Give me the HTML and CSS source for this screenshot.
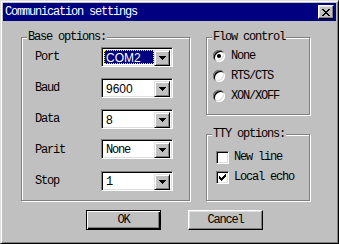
FILE: index.html
```html
<!DOCTYPE html>
<html lang="en">
<head>
  <meta charset="UTF-8">
  <title>Communication settings</title>
  <link rel="stylesheet" href="styles.css">
</head>
<body>
  <div class="window">
    <div class="titlebar">
      <span class="title">Communication settings</span>
      <button class="close-btn">
        <svg width="8" height="7" viewBox="0 0 8 7"><path d="M0 0h2v1H0zM6 0h2v1H6zM1 1h2v1H1zM5 1h2v1H5zM2 2h4v1H2zM3 3h2v1H3zM2 4h4v1H2zM1 5h2v1H1zM5 5h2v1H5zM0 6h2v1H0zM6 6h2v1H6z" fill="#000"/></svg>
      </button>
    </div>

    <div class="dialog-body">
      <div class="groups">
        <!-- Base options -->
        <div class="group group-base">
          <div class="group-title">Base options:</div>
          <div class="field-grid">
            <span class="field-label">Port</span>
            <div class="combo">
              <span class="combo-value sans focused">COM2</span>
              <span class="combo-btn"><svg width="7" height="4" viewBox="0 0 7 4"><path d="M0 0h7v1H0zM1 1h5v1H1zM2 2h3v1H2zM3 3h1v1H3z"/></svg></span>
            </div>

            <span class="field-label">Baud</span>
            <div class="combo">
              <span class="combo-value sans">9600</span>
              <span class="combo-btn"><svg width="7" height="4" viewBox="0 0 7 4"><path d="M0 0h7v1H0zM1 1h5v1H1zM2 2h3v1H2zM3 3h1v1H3z"/></svg></span>
            </div>

            <span class="field-label">Data</span>
            <div class="combo">
              <span class="combo-value sans">8</span>
              <span class="combo-btn"><svg width="7" height="4" viewBox="0 0 7 4"><path d="M0 0h7v1H0zM1 1h5v1H1zM2 2h3v1H2zM3 3h1v1H3z"/></svg></span>
            </div>

            <span class="field-label">Parit</span>
            <div class="combo combo-parit">
              <span class="combo-value">None</span>
              <span class="combo-btn"><svg width="7" height="4" viewBox="0 0 7 4"><path d="M0 0h7v1H0zM1 1h5v1H1zM2 2h3v1H2zM3 3h1v1H3z"/></svg></span>
            </div>

            <span class="field-label">Stop</span>
            <div class="combo">
              <span class="combo-value">1</span>
              <span class="combo-btn"><svg width="7" height="4" viewBox="0 0 7 4"><path d="M0 0h7v1H0zM1 1h5v1H1zM2 2h3v1H2zM3 3h1v1H3z"/></svg></span>
            </div>
          </div>
        </div>

        <div class="side">
          <!-- Flow control -->
          <div class="group group-flow">
            <div class="group-title">Flow control</div>
            <div class="option-list radios">
              <div class="option"><span class="radio checked"></span>None</div>
              <div class="option"><span class="radio"></span>RTS/CTS</div>
              <div class="option"><span class="radio"></span>XON/XOFF</div>
            </div>
          </div>

          <!-- TTY options -->
          <div class="group group-tty">
            <div class="group-title">TTY options:</div>
            <div class="option-list checks">
              <div class="option"><span class="checkbox"></span>New line</div>
              <div class="option"><span class="checkbox"><svg width="7" height="7" viewBox="0 0 7 7"><path d="M6 0h1v1H6zM5 1h2v1H5zM0 2h1v1H0zM4 2h3v1H4zM0 3h2v1H0zM3 3h3v1H3zM0 4h5v1H0zM1 5h3v1H1zM2 6h1v1H2z"/></svg></span>Local echo</div>
            </div>
          </div>
        </div>
      </div>

      <div class="buttons">
        <button class="btn btn-default">OK</button>
        <button class="btn">Cancel</button>
      </div>
    </div>
  </div>
</body>
</html>
```

FILE: styles.css
```css
body {
  margin: 0;
  background-color: #c0c0c0;
  font-family: "Liberation Mono", monospace;
  font-size: 12px;
  letter-spacing: -1.2px;
  color: #000;
}
.window {
  box-sizing: border-box;
  width: 339px;
  height: 244px;
  padding: 2px;
  background-color: #c0c0c0;
  border: 1px solid;
  border-color: #dfdfdf #000 #000 #dfdfdf;
  box-shadow: inset 1px 1px #fff, inset -1px -1px #808080;
}
.titlebar {
  height: 18px;
  padding: 0 2px;
  display: flex;
  align-items: center;
  justify-content: space-between;
  background-color: #000080;
  color: #fff;
}
.close-btn {
  box-sizing: border-box;
  width: 16px;
  height: 14px;
  padding: 0;
  display: flex;
  align-items: center;
  justify-content: center;
  background-color: #c0c0c0;
  border: 1px solid;
  border-color: #fff #000 #000 #fff;
  box-shadow: inset -1px -1px #808080, inset 1px 1px #dfdfdf;
}
.dialog-body {
  padding: 16px 0 0 18px;
}
.groups {
  display: flex;
  gap: 16px;
}
.group {
  box-sizing: border-box;
  border: 1px solid #808080;
  box-shadow: 1px 1px 0 #fff, inset 1px 1px 0 #fff;
}
.group-title {
  width: fit-content;
  height: 12px;
  line-height: 12px;
  margin: -7px 0 0 5px;
  padding: 0 1px;
  background-color: #c0c0c0;
}
.group-base {
  width: 169px;
  height: 164px;
}
.side {
  display: flex;
  flex-direction: column;
  gap: 19px;
}
.group-flow {
  width: 104px;
  height: 78px;
}
.group-tty {
  width: 104px;
  height: 67px;
}

/* combos */
.field-grid {
  display: grid;
  grid-template-columns: 66px 72px;
  grid-auto-rows: 20px;
  row-gap: 11px;
  align-items: center;
  margin-top: 4px;
  padding-left: 13px;
}
.combo {
  box-sizing: border-box;
  width: 72px;
  height: 20px;
  padding: 2px;
  display: flex;
  background-color: #fff;
  border: 1px solid;
  border-color: #808080 #fff #fff #808080;
  box-shadow: inset 1px 1px #000, inset -1px -1px #dfdfdf;
}
.combo-parit {
  margin-top: -2px;
}
.combo-value {
  flex: 1;
  padding-left: 2px;
  line-height: 16px;
}
.combo-value.sans {
  font-family: "Liberation Sans", Arial, sans-serif;
  letter-spacing: 0;
}
.combo-value.focused {
  background-color: #000080;
  color: #fff;
  outline: 1px dotted #ff0;
  outline-offset: -1px;
}
.combo-btn {
  box-sizing: border-box;
  width: 16px;
  height: 16px;
  display: flex;
  align-items: center;
  justify-content: center;
  background-color: #c0c0c0;
  border: 1px solid;
  border-color: #dfdfdf #000 #000 #dfdfdf;
  box-shadow: inset 1px 1px #fff, inset -1px -1px #808080;
}

/* radios and checkboxes */
.option-list {
  display: flex;
  flex-direction: column;
}
.radios {
  margin-top: 3px;
  padding-left: 6px;
}
.checks {
  margin-top: 7px;
  padding-left: 9px;
}
.option {
  height: 20px;
  display: flex;
  align-items: center;
}
.radio {
  position: relative;
  width: 12px;
  height: 12px;
  margin-right: 6px;
  border-radius: 50%;
  background-color: #fff;
  box-shadow: inset 1px 1px #808080, inset -1px -1px #fff, inset 2px 2px #000, inset -2px -2px #dfdfdf;
}
.radio.checked::after {
  content: "";
  position: absolute;
  left: 4px;
  top: 4px;
  width: 4px;
  height: 4px;
  border-radius: 50%;
  background-color: #000;
}
.checkbox {
  box-sizing: border-box;
  width: 13px;
  height: 13px;
  margin-right: 5px;
  display: flex;
  align-items: center;
  justify-content: center;
  background-color: #fff;
  border: 1px solid;
  border-color: #808080 #fff #fff #808080;
  box-shadow: inset 1px 1px #000, inset -1px -1px #dfdfdf;
}

/* buttons */
.buttons {
  display: flex;
  gap: 27px;
  margin: 9px 0 0 65px;
}
.btn {
  box-sizing: border-box;
  width: 75px;
  height: 20px;
  padding: 0;
  font-family: "Liberation Mono", monospace;
  font-size: 12px;
  letter-spacing: -1.2px;
  color: #000;
  background-color: #c0c0c0;
  border: 1px solid;
  border-color: #fff #000 #000 #fff;
  box-shadow: inset -1px -1px #808080, inset 1px 1px #dfdfdf;
}
.btn-default {
  border-color: #000;
  box-shadow: inset 1px 1px #fff, inset -1px -1px #000, inset -2px -2px #808080;
}
```
